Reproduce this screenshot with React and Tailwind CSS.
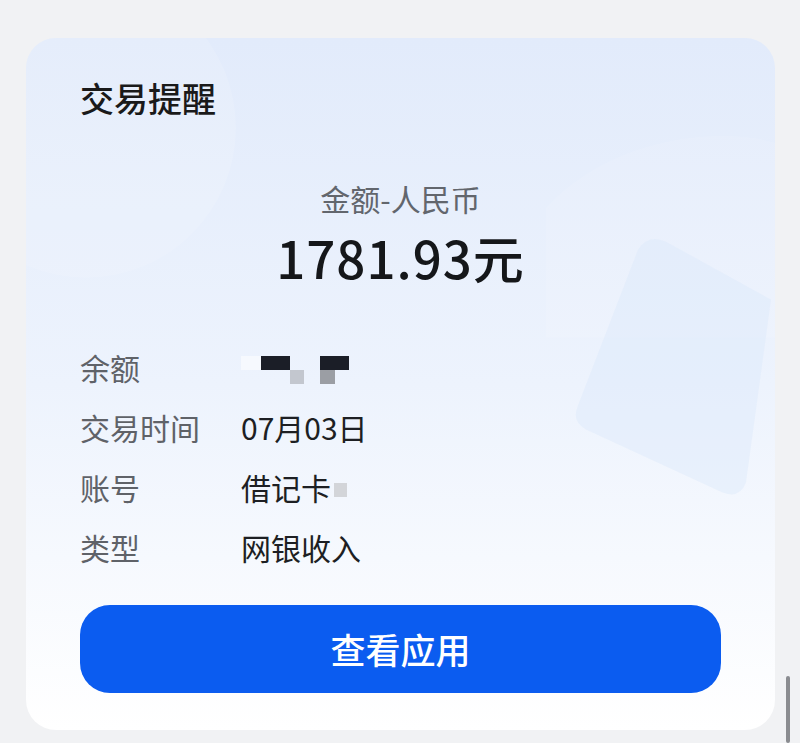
import React from "react";

const rows = [
  { label: "余额", value: null },
  { label: "交易时间", value: "07月03日" },
  { label: "账号", value: "借记卡" },
  { label: "类型", value: "网银收入" },
];

// pixelated balance
function Mosaic() {
  return (
    <div className="flex items-start pt-[6px]">
      <div className="h-[14px] w-[20px] bg-[#f6f9fe]" />
      <div className="h-[14px] w-[29px] bg-[#1b1e27]" />
      <div className="mt-[14px] h-[14px] w-[14px] bg-[#c3c7cf]" />
      <div className="ml-[16px] flex flex-col">
        <div className="h-[14px] w-[29px] bg-[#1b1e27]" />
        <div className="h-[14px] w-[15px] bg-[#9b9ea4]" />
      </div>
    </div>
  );
}

function Decor() {
  return (
    <svg
      className="pointer-events-none absolute inset-0 h-full w-full"
      viewBox="0 0 749 693"
      preserveAspectRatio="none"
    >
      <circle cx="60" cy="90" r="150" fill="#ffffff" opacity="0.12" />
      <path d="M520 170 C 590 95, 700 90, 749 105 L 749 300 L 520 300 Z" fill="#ffffff" opacity="0.1" />
      <path
        d="M612 212 Q 622 196 640 204 L 745 262 L 720 445 Q 714 462 696 455 L 560 392 Q 545 384 552 368 Z"
        fill="#dce8fb"
        opacity="0.45"
      />
    </svg>
  );
}

export default function App() {
  return (
    <div
      className="relative h-[743px] w-[800px] overflow-hidden bg-[#f1f2f4]"
      style={{ fontFamily: '"Noto Sans CJK SC", "Noto Sans", sans-serif' }}
    >
      <div className="ml-[26px] mt-[38px] w-[749px]">
        <div className="relative overflow-hidden rounded-[30px] bg-gradient-to-b from-[#e2ebfb] via-[#edf3fd] to-[#ffffff]">
          <Decor />
          <div className="relative px-[54px] pb-[37px] pt-[40px]">
            <div className="text-[34px] font-medium leading-[40px] text-[#1a1a1a]">交易提醒</div>

            <div className="mt-[62px] text-center text-[30px] leading-[36px] text-[#62666d]">金额-人民币</div>
            <div className="mt-[12px] text-center text-[51px] font-medium leading-[58px] tracking-[1px] text-[#15171a]">
              1781.93元
            </div>

            <div className="mt-[51px] flex flex-col">
              {rows.map((r) => (
                <div key={r.label} className="flex h-[60px] items-center">
                  <div className="w-[161px] text-[30px] text-[#5f6268]">{r.label}</div>
                  {r.value === null ? (
                    <Mosaic />
                  ) : (
                    <div className="flex items-center text-[30px] text-[#1d1f23]">
                      {r.value}
                      {r.label === "账号" && (
                        <span className="ml-[3px] mt-[6px] inline-block h-[14px] w-[13px] bg-[#d3d5d9]" />
                      )}
                    </div>
                  )}
                </div>
              ))}
            </div>

            <button className="mt-[28px] flex h-[88px] w-full items-center justify-center rounded-[30px] bg-[#0b5cf0] text-[35px] font-medium text-white">
              查看应用
            </button>
          </div>
        </div>
      </div>
      <div className="absolute right-[10px] top-[676px] h-[67px] w-[4px] rounded-full bg-[#8a8c90]" />
    </div>
  );
}
